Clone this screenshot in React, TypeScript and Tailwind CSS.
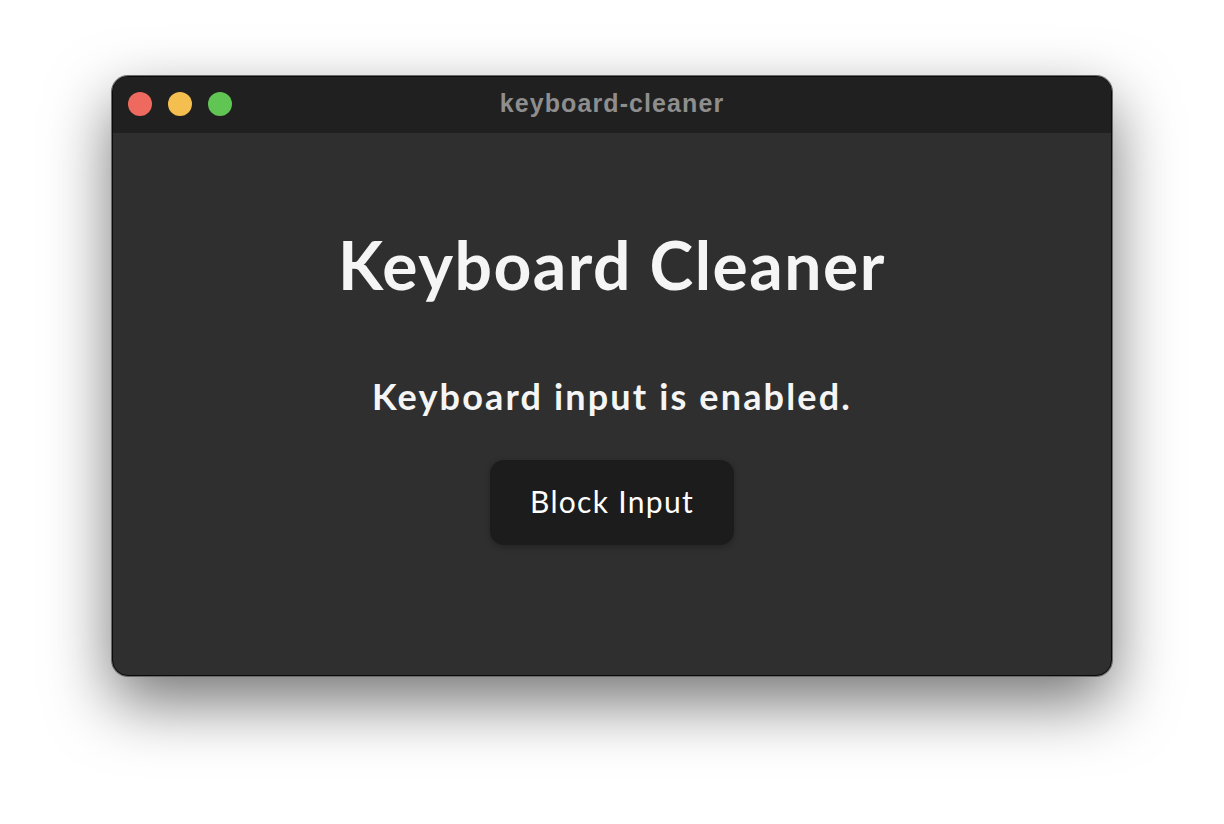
import React from 'react';

const App: React.FC = () => {
  return (
    <div className="w-[1224px] h-[824px] bg-white flex items-start justify-center pt-[76px] overflow-hidden">
      <div className="w-[1000px] h-[600px] rounded-[16px] bg-[#2f2f2f] flex flex-col overflow-hidden border border-[#0a0a0a] shadow-[0_0_0_1px_#6a6a6a,0_26px_64px_rgba(0,0,0,0.55)]">
        {/* TITLE BAR */}
        <div className="h-[56px] shrink-0 bg-[#202020] relative flex items-center justify-center pb-[3px]">
          <div className="absolute left-[15px] top-[15px] flex gap-[16px]">
            <span className="w-[24px] h-[24px] rounded-full bg-[#ee6a5f]"></span>
            <span className="w-[24px] h-[24px] rounded-full bg-[#f5bf4f]"></span>
            <span className="w-[24px] h-[24px] rounded-full bg-[#61c554]"></span>
          </div>
          <span className="text-[25px] font-bold text-[#8e8e8e] font-['Liberation_Sans',Arial,sans-serif] tracking-[1.1px]">keyboard-cleaner</span>
        </div>

        {/* CONTENT */}
        <main className="flex-1 flex flex-col items-center pt-[92px] font-['Lato',sans-serif]">
          <h1 className="text-[66px] leading-[80px] font-bold text-[#f5f5f5] tracking-[1.5px]">Keyboard Cleaner</h1>
          <p className="mt-[71px] text-[36px] leading-[40px] font-bold text-[#f5f5f5] tracking-[2.15px]">Keyboard input is enabled.</p>
          <button className="mt-[44px] w-[244px] h-[85px] pb-[3px] rounded-[14px] bg-[#1c1c1c] text-white text-[30px] tracking-[1.3px] shadow-[0_2px_6px_rgba(0,0,0,0.25)]">
            Block Input
          </button>
        </main>
      </div>
    </div>
  );
};

export default App;
